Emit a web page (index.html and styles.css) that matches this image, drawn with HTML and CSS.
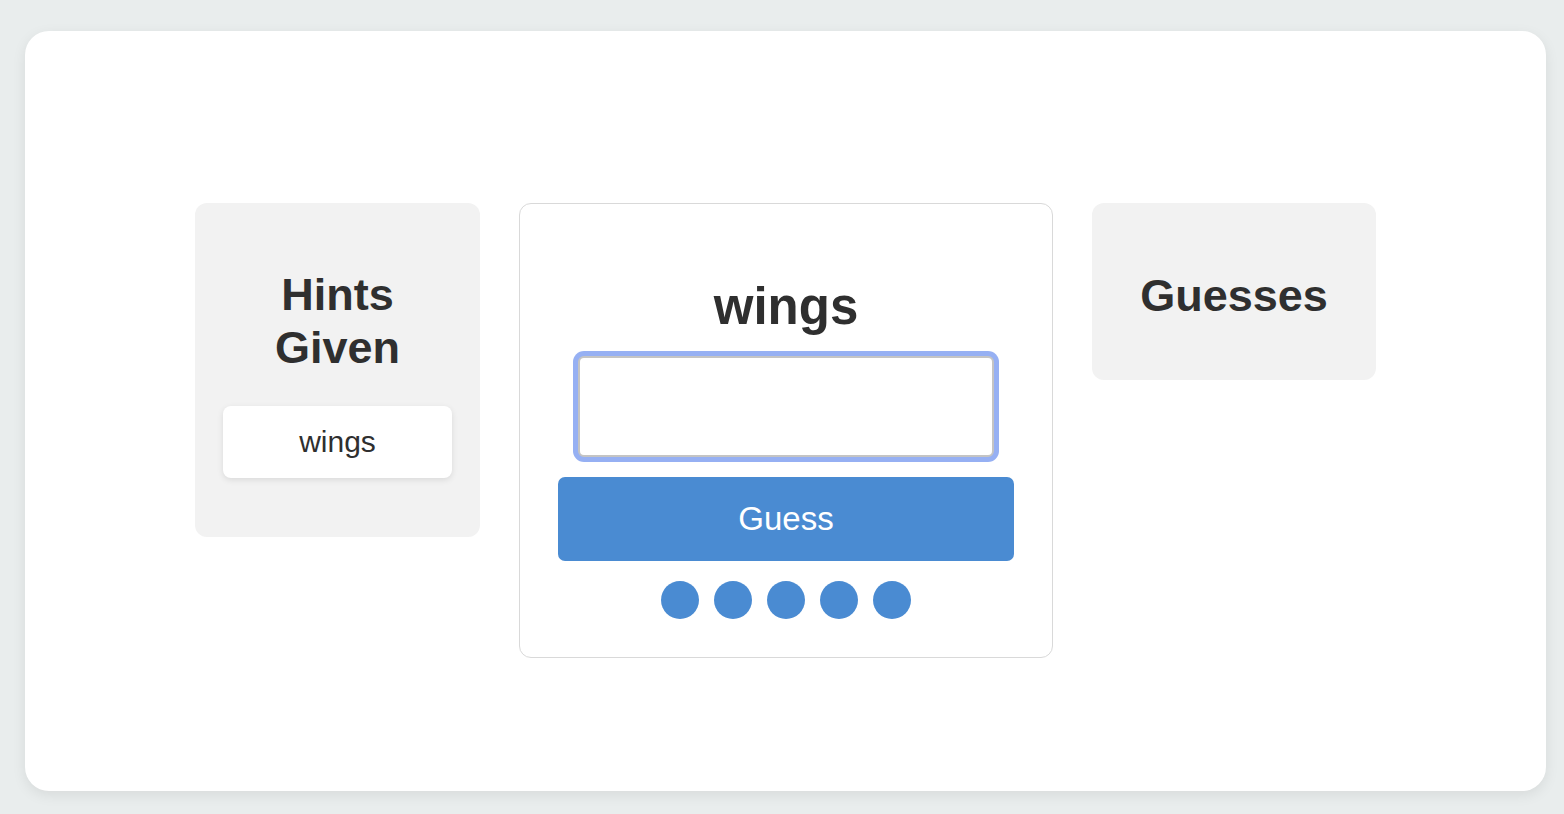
FILE: index.html
```html
<!DOCTYPE html>
<html lang="en">
<head>
<meta charset="utf-8">
<title>Hints Game</title>
<link rel="stylesheet" href="styles.css">
</head>
<body>
<div class="page">
  <main class="card">
    <div class="board">
      <section class="panel hints">
        <h2 class="panel-title">Hints<br>Given</h2>
        <div class="hint-list">
          <div class="hint">wings</div>
        </div>
      </section>
      <section class="game">
        <h1 class="word">wings</h1>
        <input class="guess-input" type="text" aria-label="Your guess">
        <button class="guess-btn" type="button">Guess</button>
        <div class="dots">
          <span class="dot"></span>
          <span class="dot"></span>
          <span class="dot"></span>
          <span class="dot"></span>
          <span class="dot"></span>
        </div>
      </section>
      <section class="panel guesses">
        <h2 class="panel-title">Guesses</h2>
      </section>
    </div>
  </main>
</div>
</body>
</html>
```

FILE: styles.css
```css
* { box-sizing: border-box; }

html, body {
  margin: 0;
  padding: 0;
}

body {
  background: #e9eded;
  font-family: "Liberation Sans", Arial, Helvetica, sans-serif;
  color: #2f2f2f;
}

.page {
  padding: 31px 18px 23px 25px;
}

.card {
  background: #ffffff;
  border-radius: 24px;
  height: 760px;
  box-shadow: 0 4px 14px rgba(0, 0, 0, 0.08);
  padding-top: 172px;
}

.board {
  display: flex;
  justify-content: center;
  align-items: flex-start;
  gap: 39px;
}

.panel {
  background: #f2f2f2;
  border-radius: 12px;
  width: 285px;
  padding: 0 28px;
  text-align: center;
}

.panel-title {
  margin: 0;
  font-size: 45px;
  line-height: 53px;
  font-weight: 700;
  color: #2f2f2f;
}

.hints .panel-title {
  padding-top: 65px;
  margin-bottom: 32px;
}

.hint-list {
  padding-bottom: 59px;
}

.hint {
  background: #ffffff;
  border-radius: 8px;
  height: 72px;
  display: flex;
  align-items: center;
  justify-content: center;
  font-size: 30px;
  color: #2f2f2f;
  box-shadow: 0 2px 6px rgba(0, 0, 0, 0.1);
}

.guesses {
  width: 284px;
}

.guesses .panel-title {
  padding-top: 66px;
  padding-bottom: 58px;
}

.game {
  width: 534px;
  border: 1px solid #d9d9d9;
  border-radius: 12px;
  padding: 73px 38px 38px;
  display: flex;
  flex-direction: column;
  align-items: center;
}

.word {
  margin: 0 0 19px;
  font-size: 51px;
  line-height: 60px;
  font-weight: 700;
  color: #2f2f2f;
}

.guess-input {
  width: 416px;
  height: 101px;
  border: 2px solid #c4c4c4;
  border-radius: 6px;
  background: #ffffff;
  box-shadow: 0 0 0 5px #96b0f3;
  outline: none;
  margin: 0 0 20px;
  font-size: 28px;
  font-family: inherit;
}

.guess-btn {
  width: 100%;
  height: 84px;
  border: none;
  border-radius: 7px;
  background: #4a8bd2;
  color: #ffffff;
  font-family: "Liberation Sans", Arial, sans-serif;
  font-size: 33px;
  margin: 0 0 20px;
  padding: 0;
}

.dots {
  display: flex;
  gap: 15px;
}

.dot {
  width: 38px;
  height: 38px;
  border-radius: 50%;
  background: #4a8bd2;
}
```
